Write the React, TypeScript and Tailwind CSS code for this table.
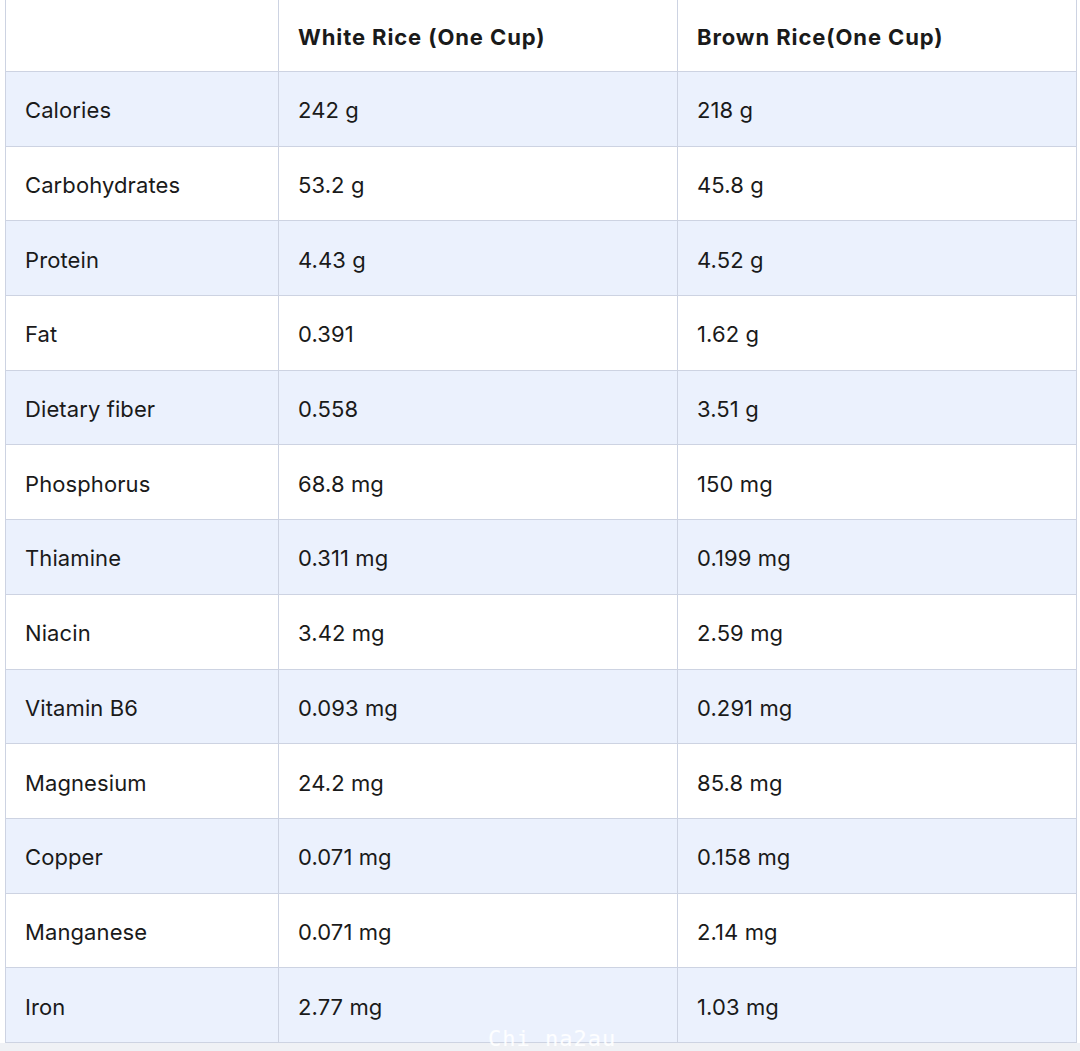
const rows: [string, string, string][] = [
  ['Calories', '242 g', '218 g'],
  ['Carbohydrates', '53.2 g', '45.8 g'],
  ['Protein', '4.43 g', '4.52 g'],
  ['Fat', '0.391', '1.62 g'],
  ['Dietary fiber', '0.558', '3.51 g'],
  ['Phosphorus', '68.8 mg', '150 mg'],
  ['Thiamine', '0.311 mg', '0.199 mg'],
  ['Niacin', '3.42 mg', '2.59 mg'],
  ['Vitamin B6', '0.093 mg', '0.291 mg'],
  ['Magnesium', '24.2 mg', '85.8 mg'],
  ['Copper', '0.071 mg', '0.158 mg'],
  ['Manganese', '0.071 mg', '2.14 mg'],
  ['Iron', '2.77 mg', '1.03 mg'],
];

const cell = 'flex items-center px-[19px] border-r border-[#cdd3e2]';

export default function App() {
  return (
    <div
      className="relative flex h-[1051px] flex-col overflow-hidden bg-white text-[22px] text-[#1a1a1a]"
      style={{ fontFamily: 'Inter, "Noto Sans", sans-serif' }}
    >
      <div className="ml-[5px] w-[1072px] border-l border-[#cdd3e2]">
        {/* header */}
        <div className="grid h-[72px] grid-cols-[273px_399px_399px] border-b border-[#cdd3e2] font-bold tracking-[0.9px]">
          <div className={cell}></div>
          <div className={cell + ' pt-[3px]'}>White Rice (One Cup)</div>
          <div className={cell + ' pt-[3px]'}>Brown Rice(One Cup)</div>
        </div>
        {rows.map(([name, white, brown], i) => (
          <div
            key={name}
            className={
              'grid h-[74.7px] grid-cols-[273px_399px_399px] border-b border-[#cdd3e2] tracking-[0.1px] ' +
              (i % 2 === 0 ? 'bg-[#ebf1fd]' : 'bg-white')
            }
          >
            <div className={cell + ' pt-[4px]'}>{name}</div>
            <div className={cell + ' pt-[4px]'}>{white}</div>
            <div className={cell + ' pt-[4px]'}>{brown}</div>
          </div>
        ))}
      </div>
      <div className="flex-1 bg-[#eff1f5]"></div>

      {/* watermark */}
      <div
        className="absolute left-[488px] top-[1022px] text-[22px] tracking-[1px] text-white/90"
        style={{ fontFamily: '"DejaVu Sans Mono", monospace' }}
      >
        Chi na2au
      </div>
    </div>
  );
}
